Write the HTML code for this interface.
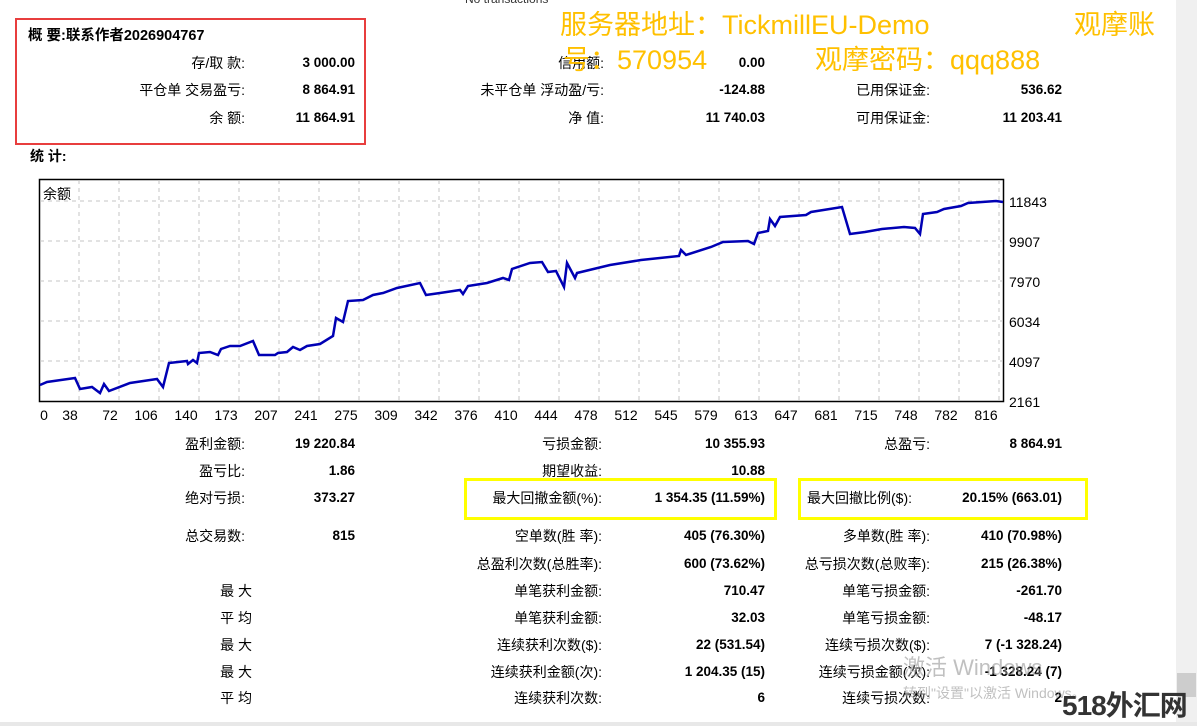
<!DOCTYPE html>
<html><head><meta charset="utf-8">
<style>
*{margin:0;padding:0;box-sizing:border-box}
body{width:1197px;height:726px;overflow:hidden;background:#fff;position:relative;font-family:"Liberation Sans","Noto Sans CJK SC",sans-serif;font-size:14px;color:#000}
.t{position:absolute;white-space:nowrap;line-height:16px}
.r{text-align:right}
.b{font-weight:bold;font-size:13.5px}
.wm{position:absolute;white-space:nowrap;color:#ffc000;font-size:27px;line-height:30px;font-family:"Liberation Sans","Noto Sans CJK SC",sans-serif}
</style></head><body>
<div class="t" style="left:465px;top:-9px;font-size:12px;color:#333">No transactions</div>

<div style="position:absolute;left:15px;top:18px;width:351px;height:127px;border:2px solid #e83e3e"></div>
<div class="t b" style="left:28px;top:28px;font-size:14.5px">概 要:联系作者2026904767</div>

<div class="t r" style="right:952px;top:55px">存/取 款:</div>
<div class="t r b" style="right:842px;top:55px">3 000.00</div>
<div class="t r" style="right:952px;top:82px">平仓单 交易盈亏:</div>
<div class="t r b" style="right:842px;top:82px">8 864.91</div>
<div class="t r" style="right:952px;top:110px">余 额:</div>
<div class="t r b" style="right:842px;top:110px">11 864.91</div>

<div class="t r" style="right:593px;top:55px">信用额:</div>
<div class="t r b" style="right:432px;top:55px">0.00</div>
<div class="t r" style="right:593px;top:82px">未平仓单 浮动盈/亏:</div>
<div class="t r b" style="right:432px;top:82px">-124.88</div>
<div class="t r" style="right:593px;top:110px">净 值:</div>
<div class="t r b" style="right:432px;top:110px">11 740.03</div>

<div class="t r" style="right:267px;top:82px">已用保证金:</div>
<div class="t r b" style="right:135px;top:82px">536.62</div>
<div class="t r" style="right:267px;top:110px">可用保证金:</div>
<div class="t r b" style="right:135px;top:110px">11 203.41</div>

<div class="t b" style="left:30px;top:148px;font-size:14px">统 计:</div>

<svg style="position:absolute;left:0;top:0" width="1197" height="726">
<rect x="39.5" y="179.5" width="964" height="222" fill="#fff" stroke="#000" stroke-width="1.5"/>
<g stroke="#c4c4c4" stroke-dasharray="4,4" stroke-width="1">
<line x1="40" y1="201" x2="1003" y2="201"/><line x1="40" y1="241" x2="1003" y2="241"/><line x1="40" y1="281" x2="1003" y2="281"/><line x1="40" y1="321" x2="1003" y2="321"/><line x1="40" y1="361" x2="1003" y2="361"/>
<line x1="79" y1="180" x2="79" y2="401"/><line x1="119" y1="180" x2="119" y2="401"/><line x1="159" y1="180" x2="159" y2="401"/><line x1="199" y1="180" x2="199" y2="401"/><line x1="239" y1="180" x2="239" y2="401"/><line x1="279" y1="180" x2="279" y2="401"/><line x1="319" y1="180" x2="319" y2="401"/><line x1="359" y1="180" x2="359" y2="401"/><line x1="399" y1="180" x2="399" y2="401"/><line x1="439" y1="180" x2="439" y2="401"/><line x1="479" y1="180" x2="479" y2="401"/><line x1="519" y1="180" x2="519" y2="401"/><line x1="559" y1="180" x2="559" y2="401"/><line x1="599" y1="180" x2="599" y2="401"/><line x1="639" y1="180" x2="639" y2="401"/><line x1="679" y1="180" x2="679" y2="401"/><line x1="719" y1="180" x2="719" y2="401"/><line x1="759" y1="180" x2="759" y2="401"/><line x1="799" y1="180" x2="799" y2="401"/><line x1="839" y1="180" x2="839" y2="401"/><line x1="879" y1="180" x2="879" y2="401"/><line x1="919" y1="180" x2="919" y2="401"/><line x1="959" y1="180" x2="959" y2="401"/><line x1="999" y1="180" x2="999" y2="401"/>
</g>
<polyline fill="none" stroke="#0000b4" stroke-width="2.5" points="40,385 47,382 75,378 80,389 92,387 100,393 104,384 109,391 130,383 157,379 163,387 169,363 187,361 188,364 193,360 197,363 199,353 210,352 218,355 221,349 230,346 240,346 253,341 259,355 275,355 278,353 287,352 293,347 300,350 307,346 320,344 333,336 336,318 343,322 348,301 363,300 373,295 383,293 397,288 420,283 426,295 440,293 460,290 463,294 468,286 487,283 503,278 509,280 512,269 530,263 542,262 548,272 556,271 564,287 567,263 575,278 577,273 610,265 641,260 679,256 681,250 686,255 711,247 723,242 748,241 754,244 758,233 768,231 770,219 775,226 780,217 806,215 811,212 842,207 850,234 865,232 882,229 904,227 915,228 920,234 923,214 937,212 944,209 961,206 968,203 982,202 996,201 1003,202"/>
<g font-family="Liberation Sans,sans-serif" font-size="14" fill="#000">
<text x="1009" y="207">11843</text><text x="1009" y="247">9907</text><text x="1009" y="287">7970</text><text x="1009" y="327">6034</text><text x="1009" y="367">4097</text><text x="1009" y="407">2161</text>
<g text-anchor="middle">
<text x="44" y="420">0</text><text x="70" y="420">38</text><text x="110" y="420">72</text><text x="146" y="420">106</text><text x="186" y="420">140</text><text x="226" y="420">173</text><text x="266" y="420">207</text><text x="306" y="420">241</text><text x="346" y="420">275</text><text x="386" y="420">309</text><text x="426" y="420">342</text><text x="466" y="420">376</text><text x="506" y="420">410</text><text x="546" y="420">444</text><text x="586" y="420">478</text><text x="626" y="420">512</text><text x="666" y="420">545</text><text x="706" y="420">579</text><text x="746" y="420">613</text><text x="786" y="420">647</text><text x="826" y="420">681</text><text x="866" y="420">715</text><text x="906" y="420">748</text><text x="946" y="420">782</text><text x="986" y="420">816</text>
</g>
</g>
<text x="43" y="199" font-size="14" font-family="Noto Sans CJK SC,sans-serif">余额</text>
<rect x="465.5" y="479.5" width="310" height="39" fill="none" stroke="#ffff00" stroke-width="3"/>
<rect x="799.5" y="479.5" width="287" height="39" fill="none" stroke="#ffff00" stroke-width="3"/>
</svg>

<div class="t r" style="right:952px;top:436px">盈利金额:</div><div class="t r b" style="right:842px;top:436px">19 220.84</div>
<div class="t r" style="right:952px;top:463px">盈亏比:</div><div class="t r b" style="right:842px;top:463px">1.86</div>
<div class="t r" style="right:952px;top:490px">绝对亏损:</div><div class="t r b" style="right:842px;top:490px">373.27</div>
<div class="t r" style="right:952px;top:528px">总交易数:</div><div class="t r b" style="right:842px;top:528px">815</div>
<div class="t r" style="right:945px;top:583px">最 大</div>
<div class="t r" style="right:945px;top:610px">平 均</div>
<div class="t r" style="right:945px;top:637px">最 大</div>
<div class="t r" style="right:945px;top:664px">最 大</div>
<div class="t r" style="right:945px;top:690px">平 均</div>

<div class="t r" style="right:595px;top:436px">亏损金额:</div><div class="t r b" style="right:432px;top:436px">10 355.93</div>
<div class="t r" style="right:595px;top:463px">期望收益:</div><div class="t r b" style="right:432px;top:463px">10.88</div>
<div class="t r" style="right:595px;top:490px">最大回撤金额(%):</div><div class="t r b" style="right:432px;top:490px">1 354.35 (11.59%)</div>
<div class="t r" style="right:595px;top:528px">空单数(胜 率):</div><div class="t r b" style="right:432px;top:528px">405 (76.30%)</div>
<div class="t r" style="right:595px;top:556px">总盈利次数(总胜率):</div><div class="t r b" style="right:432px;top:556px">600 (73.62%)</div>
<div class="t r" style="right:595px;top:583px">单笔获利金额:</div><div class="t r b" style="right:432px;top:583px">710.47</div>
<div class="t r" style="right:595px;top:610px">单笔获利金额:</div><div class="t r b" style="right:432px;top:610px">32.03</div>
<div class="t r" style="right:595px;top:637px">连续获利次数($):</div><div class="t r b" style="right:432px;top:637px">22 (531.54)</div>
<div class="t r" style="right:595px;top:664px">连续获利金额(次):</div><div class="t r b" style="right:432px;top:664px">1 204.35 (15)</div>
<div class="t r" style="right:595px;top:690px">连续获利次数:</div><div class="t r b" style="right:432px;top:690px">6</div>

<div class="t r" style="right:267px;top:436px">总盈亏:</div><div class="t r b" style="right:135px;top:436px">8 864.91</div>
<div class="t r" style="right:285px;top:490px">最大回撤比例($):</div><div class="t r b" style="right:135px;top:490px">20.15% (663.01)</div>
<div class="t r" style="right:267px;top:528px">多单数(胜 率):</div><div class="t r b" style="right:135px;top:528px">410 (70.98%)</div>
<div class="t r" style="right:267px;top:556px">总亏损次数(总败率):</div><div class="t r b" style="right:135px;top:556px">215 (26.38%)</div>
<div class="t r" style="right:267px;top:583px">单笔亏损金额:</div><div class="t r b" style="right:135px;top:583px">-261.70</div>
<div class="t r" style="right:267px;top:610px">单笔亏损金额:</div><div class="t r b" style="right:135px;top:610px">-48.17</div>
<div class="t r" style="right:267px;top:637px">连续亏损次数($):</div><div class="t r b" style="right:135px;top:637px">7 (-1 328.24)</div>
<div class="t r" style="right:267px;top:664px">连续亏损金额(次):</div><div class="t r b" style="right:135px;top:664px">-1 328.24 (7)</div>
<div class="t r" style="right:267px;top:690px">连续亏损次数:</div><div class="t r b" style="right:135px;top:690px">2</div>

<div class="wm" style="left:560px;top:10px">服务器地址：TickmillEU-Demo</div>
<div class="wm" style="left:1074px;top:10px">观摩账</div>
<div class="wm" style="left:563px;top:45px">号：570954</div>
<div class="wm" style="left:815px;top:45px">观摩密码：qqq888</div>

<div class="t" style="left:903px;top:656px;font-size:22px;line-height:24px;color:rgba(150,150,150,0.6)">激活 Windows</div>
<div class="t" style="left:903px;top:685px;font-size:14px;color:rgba(150,150,150,0.6)">转到"设置"以激活 Windows。</div>

<div style="position:absolute;left:1176px;top:0;width:21px;height:726px;background:#f0f0f0"></div>
<div style="position:absolute;left:1177px;top:673px;width:19px;height:24px;background:#cdcdcd"></div>
<div style="position:absolute;left:0;top:722px;width:1197px;height:4px;background:#e8e8e8"></div>
<div class="t b" style="left:1062px;top:690px;font-size:28px;line-height:32px;color:#333;letter-spacing:-1px">518外汇网</div>
</body></html>
